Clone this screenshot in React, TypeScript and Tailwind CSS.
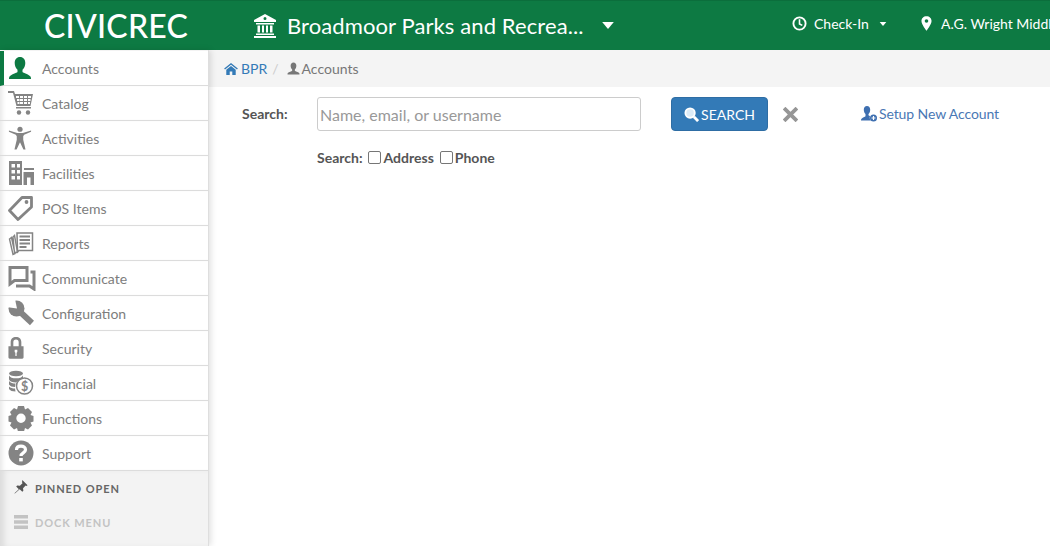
import React from "react";

const G = "#848484";

const icons: Record<string, React.ReactNode> = {
  Accounts: (
    <svg viewBox="0 0 24 24" className="w-[24px] h-[24px]"><path fill="#0d7a43" d="M12 1c3.300 0 5.300 2.500 5.300 6 0 2.800-1.200 5.400-2.800 6.800v2.200c1 1 6 2 8 4.500.5.700.5 1.500.5 2.500H1c0-1 0-1.800.5-2.500 2-2.500 7-3.500 8-4.500v-2.200C7.900 12.400 6.700 9.800 6.700 7c0-3.500 2-6 5.300-6z" /></svg>
  ),
  Catalog: (
    <svg viewBox="0 0 26 26" className="w-[26px] h-[26px]"><path fill={G} d="M0 1h6l1 3h18l-2.500 12H8.500L5 3H0z" /><path fill="#fff" d="M8 6h3v2H8zM12 6h3v2h-3zM16 6h3v2h-3zM20 6h3v2h-3zM9 9h2.500v2H9zM12 9h3v2h-3zM16 9h3v2h-3zM20 9h2.500v2H20zM9.500 12h2v2h-2zM12 12h3v2h-3zM16 12h3v2h-3zM20 12h2v2h-2z" /><path fill={G} d="M8 17h15v1.500H8z" /><circle cx="11" cy="22.500" r="2.200" fill={G} /><circle cx="20" cy="22.500" r="2.200" fill={G} /></svg>
  ),
  Activities: (
    <svg viewBox="0 0 26 26" className="w-[24px] h-[26px]"><circle cx="13" cy="3.500" r="2.800" fill={G} /><path fill={G} d="M1 5l9 2.500h6L25 5v1.200l-7.500 3.300-1 1.500v4L19 25.500h-2.300L13 17.500l-3.700 8H7L9.500 15v-4l-1-1.500L1 6.200z" /></svg>
  ),
  Facilities: (
    <svg viewBox="0 0 26 26" className="w-[26px] h-[26px]"><path fill={G} fillRule="evenodd" d="M1 1h13v24H1zM3.500 4v3.500H7V4zM9 4v3.500h3V4zM3.500 10v3.500H7V10zM9 10v3.500h3V10zM3.500 16v3.500H7V16zM9 16v3.500h3V16z" /><path fill={G} d="M16 8h10v2H16z" /><path fill={G} fillRule="evenodd" d="M15.500 12H26v13h-3.500v-7.500h-3.500V25h-3.500z" /></svg>
  ),
  "POS Items": (
    <svg viewBox="0 0 26 26" className="w-[26px] h-[26px]"><path fill="none" stroke={G} strokeWidth="2.800" strokeLinejoin="round" d="M14 2.500h9.500V12L10 24.500 1.500 15.500z" /><circle cx="18.500" cy="7" r="1.900" fill={G} /></svg>
  ),
  Reports: (
    <svg viewBox="0 0 26 26" className="w-[26px] h-[26px]"><path fill="none" stroke={G} strokeWidth="1.500" d="M9 3h15.500v17.500H11L9.500 22z" /><path fill="none" stroke={G} strokeWidth="1.400" d="M6.500 5.500L9.500 22l-3 1L5 7zM3.500 7.500l3.500 16-2 1L1.500 9z" /><path stroke={G} strokeWidth="1.800" d="M11.500 6.500h10.500M11.500 10h10.500M11.500 13.500h10.500M11.500 17h7" /></svg>
  ),
  Communicate: (
    <svg viewBox="0 0 28 26" className="w-[28px] h-[26px]"><path fill="none" stroke={G} strokeWidth="3" d="M2 2.500h17v13H6.500L2 19z" /><path fill="none" stroke={G} strokeWidth="3" d="M22.500 7h3.500v17l-4.500-3H8" /></svg>
  ),
  Configuration: (
    <svg viewBox="0 0 26 26" className="w-[26px] h-[26px]"><circle cx="8.500" cy="8.500" r="8" fill={G} /><path fill="#fff" d="M9 8.500L7 -1H-1V7z" /><path stroke={G} strokeWidth="6" d="M9 9l15 14" /></svg>
  ),
  Security: (
    <svg viewBox="4 0 18 26" className="w-[16px] h-[24px]"><path fill={G} fillRule="evenodd" d="M7 11V6.500C7 2.500 9.500.5 13 .5s6 2 6 6V11h2.500v12.500c0 1-.5 1.500-1.500 1.500H6c-1 0-1.500-.5-1.500-1.500V11zM10 11h6V6.500C16 4.500 15 3.500 13 3.500s-3 1-3 3zM11.500 15v2.500l.8.8V22h1.400v-3.700l.8-.8V15z" /></svg>
  ),
  Financial: (
    <svg viewBox="0 0 26 26" className="w-[26px] h-[26px]"><ellipse cx="8" cy="3.500" rx="7" ry="2.800" fill={G} /><path fill={G} d="M1 5.500c1 2 3.500 2.800 7 2.800s6-.8 7-2.800V9c-3 .5-6 2-7 3.500-3.500 0-6-.8-7-3zM1 11c1.500 2 4 2.500 6.500 2.500L7 17c-3 0-5-.8-6-2.500zM1 16.500c1.500 1.500 3.500 2 6 2l.5 3c-3 0-5.500-.8-6.500-2.500z" /><circle cx="16.500" cy="16" r="8" fill="none" stroke={G} strokeWidth="1.500" /><text x="16.500" y="20.500" fontSize="12.500" fontWeight="700" textAnchor="middle" fill={G} fontFamily="Lato, sans-serif">$</text></svg>
  ),
  Functions: (
    <svg viewBox="0 0 26 26" className="w-[26px] h-[26px]"><path fill={G} fillRule="evenodd" d="M10 1h6l1 3.500 3-1.500 4 4-1.500 3 3 1v5.500l-3 1 1.500 3-4 4-3-1.500-1 3.500h-6l-1-3.500-3 1.500-4-4 1.500-3-3-1V11l3-1L2 7l4-4 3 1.500zM13 8.500a4.700 4.700 0 100 9.400 4.700 4.700 0 000-9.400z" /></svg>
  ),
  Support: (
    <svg viewBox="0 0 26 26" className="w-[26px] h-[26px]"><circle cx="13" cy="13" r="12.500" fill={G} /><path fill="none" stroke="#fff" strokeWidth="3.200" d="M8.500 10c0-2.500 2-3.800 4.500-3.800s4.500 1.300 4.500 3.500c0 3.300-4.500 3-4.500 6.300" /><rect x="11.200" y="18" width="3.600" height="3.400" fill="#fff" /></svg>
  ),
};

const items = ["Accounts", "Catalog", "Activities", "Facilities", "POS Items", "Reports", "Communicate", "Configuration", "Security", "Financial", "Functions", "Support"];

function Bust({ className, color }: { className: string; color: string }) {
  return (
    <svg viewBox="0 0 24 24" className={className}><path fill={color} d="M12 1c3.300 0 5.300 2.500 5.300 6 0 2.800-1.200 5.400-2.800 6.800v2.200c1 1 6 2 8 4.500.5.700.5 1.500.5 2.500H1c0-1 0-1.800.5-2.500 2-2.500 7-3.500 8-4.500v-2.200C7.900 12.400 6.700 9.800 6.700 7c0-3.500 2-6 5.300-6z" /></svg>
  );
}

function Caret({ w, h }: { w: string; h: string }) {
  return <svg viewBox="0 0 10 6" className={`${w} ${h}`}><path fill="#fff" d="M0 0h10L5 6z" /></svg>;
}

export default function App() {
  return (
    <div className="w-[1050px] h-[546px] overflow-hidden bg-white flex flex-col font-['Lato','Liberation_Sans',sans-serif]">
      <header className="h-[50px] shrink-0 bg-[#0d7a43] flex items-center text-white whitespace-nowrap border-t border-[#0b6e3c] overflow-hidden">
        <div className="w-[209px] shrink-0 pl-[44px] text-[32px] leading-none font-medium tracking-[0.25px] mt-[1px]">CIVICREC</div>
        <div className="flex items-center ml-[44px] w-[539px] shrink-0">
          <svg viewBox="0 0 24 24" className="w-[24px] h-[24px]"><path fill="#fff" fillRule="evenodd" d="M12 0l11 6v2H1V6zM12 3a1.500 1.500 0 100 3 1.500 1.500 0 000-3zM3 9h18v1.500H3zM4.500 11.500h2.500v7H4.500zM9 11.500h2v7H9zM13 11.500h2v7h-2zM17 11.500h2.500v7H17zM3 19.500h18V21H3zM1 22h22v2H1z" /></svg>
          <span className="ml-[10px] text-[22px] leading-none w-[296px] mt-[1px] tracking-[0.1px]">Broadmoor Parks and Recrea...</span>
          <span className="ml-[19px]"><Caret w="w-[12px]" h="h-[7px]" /></span>
        </div>
        <div className="flex items-center text-[14px] w-[129px] shrink-0 -mt-[4px]">
          <svg viewBox="0 0 16 16" className="w-[15px] h-[15px]"><circle cx="8" cy="8" r="6.500" fill="none" stroke="#fff" strokeWidth="2" /><path fill="none" stroke="#fff" strokeWidth="1.700" d="M8 3.500V8.500l3 1.500" /></svg>
          <span className="ml-[7px]">Check-In</span>
          <span className="ml-[10px]"><Caret w="w-[8px]" h="h-[4px]" /></span>
        </div>
        <div className="flex items-center text-[14px] -mt-[4px]">
          <svg viewBox="0 0 12 16" className="w-[11px] h-[15px]"><path fill="#fff" fillRule="evenodd" d="M6 0c3.300 0 5.500 2.300 5.500 5.300C11.500 9 6 16 6 16S.5 9 .5 5.300C.5 2.300 2.700 0 6 0zM6 3.300a2 2 0 100 4 2 2 0 000-4z" /></svg>
          <span className="ml-[9px]">A.G. Wright Middle School</span>
        </div>
      </header>
      <div className="flex flex-1 min-h-0">
        <aside className="w-[209px] shrink-0 flex flex-col pt-[1px] bg-[#f3f3f3] border-r border-[#dedede] shadow-[2px_0_6px_rgba(0,0,0,0.12)] z-10">
          {items.map((name, i) => (
            <div key={name} className={`h-[35px] shrink-0 flex items-center bg-white border-b border-[#dcdcdc] ${i === 0 ? "border-l-[4px] border-l-[#0d7a43] pl-[4px]" : "pl-[8px] shadow-[inset_5px_0_5px_-3px_rgba(0,0,0,0.1)]"}`}>
              <span className="w-[34px] shrink-0 flex items-center">{icons[name]}</span>
              <span className="text-[14px] text-[#7d7d7d]">{name}</span>
            </div>
          ))}
          <div className="flex-1 shadow-[inset_7px_0_6px_-3px_rgba(0,0,0,0.1)]">
            <div className="h-[36px] flex items-center pl-[14px] text-[#666] text-[11px] font-bold tracking-[0.9px]">
              <svg viewBox="0 0 16 16" className="w-[14px] h-[14px] -mt-[4px]"><path fill="#555" d="M9.500 0l6 6-1.200.8-1-.5-3 3 .4 3-1.200 1.200-3-3L1 15.500l-.5-.5 5-4.500-3-3L3.700 6.300l3 .4 3-3-.5-1z" /></svg>
              <span className="ml-[7px]">PINNED OPEN</span>
            </div>
            <div className="h-[32px] flex items-center pl-[14px] text-[#c3c3c3] text-[11px] font-bold tracking-[0.9px]">
              <svg viewBox="0 0 14 14" className="w-[14px] h-[14px] -mt-[3px]"><path fill="#c3c3c3" d="M0 0h14v3.400H0zM0 5.300h14v3.400H0zM0 10.600h14V14H0z" /></svg>
              <span className="ml-[7px]">DOCK MENU</span>
            </div>
          </div>
        </aside>
        <main className="flex-1 min-w-0">
          <div className="h-[37px] bg-[#f4f4f4] flex items-center pl-[15px] text-[14px]">
            <svg viewBox="0 0 16 14" className="w-[14px] h-[12px]"><path fill="#337ab7" d="M8 0l8 6.500-1 1L8 2 1 7.500l-1-1zM2.500 8L8 3.500 13.500 8v6h-4v-4h-3v4h-4z" /></svg>
            <span className="ml-[3px] text-[#337ab7]">BPR</span>
            <span className="ml-[5px] text-[#ccc]">/</span>
            <Bust className="ml-[8px] w-[13px] h-[13px]" color="#777" />
            <span className="ml-[2px] text-[#777]">Accounts</span>
          </div>
          <div className="pl-[33px] pt-[10px] flex items-start">
            <div className="w-[75px] pt-[8px] text-[14px] font-bold text-[#555] leading-[17px]">Search:</div>
            <div>
              <div className="w-[324px] h-[34px] border border-[#ccc] rounded-[3px] flex items-center pl-[2px] pt-[1px] text-[16px] text-[#999]">Name, email, or username</div>
              <div className="mt-[17px] flex items-center text-[14px] font-bold text-[#555] leading-[20px]">
                <span>Search:</span>
                <span className="ml-[5px] -mt-[2px] w-[13px] h-[13px] border border-[#767676] rounded-[2px] bg-white" />
                <span className="ml-[3px]">Address</span>
                <span className="ml-[6px] -mt-[2px] w-[13px] h-[13px] border border-[#767676] rounded-[2px] bg-white" />
                <span className="ml-[2px]">Phone</span>
              </div>
            </div>
            <div className="ml-[30px] w-[97px] h-[34px] rounded-[4px] bg-[#337ab7] border border-[#2e6da4] flex items-center justify-center text-white text-[14px]">
              <svg viewBox="0 0 16 16" className="w-[15px] h-[15px]"><circle cx="6.500" cy="6.500" r="5" fill="#dcecf8" stroke="#fff" strokeWidth="2" /><path stroke="#fff" strokeWidth="3" d="M10.500 10.500L15 15" /></svg>
              <span className="ml-[2px]">SEARCH</span>
            </div>
            <svg viewBox="0 0 14 14" className="ml-[15px] mt-[10px] w-[15px] h-[15px]"><path stroke="#969696" strokeWidth="3.500" d="M1 1l12 12M13 1L1 13" /></svg>
            <div className="ml-[63px] mt-[8px] flex items-center text-[14px] leading-[17px] text-[#4a78b5]">
              <svg viewBox="0 0 16 16" className="w-[16px] h-[16px]"><path fill="#3e6fb0" d="M6 0c2 0 3.200 1.500 3.200 3.700 0 1.700-.7 3.300-1.700 4.200v1.300c.4.300 1 .5 1.500.8-.5 1.200-.3 3 .8 4.500H0c0-.7 0-1.100.3-1.600C1.500 11.400 4 10.800 4.500 10.200V7.900C3.500 7 2.800 5.400 2.800 3.700 2.800 1.500 4 0 6 0z" /><circle cx="12.500" cy="12" r="3.500" fill="#3e6fb0" /><path stroke="#fff" strokeWidth="1.200" d="M12.500 10v4M10.500 12h4" /></svg>
              <span className="ml-[2px] tracking-[-0.1px]">Setup New Account</span>
            </div>
          </div>
        </main>
      </div>
    </div>
  );
}
